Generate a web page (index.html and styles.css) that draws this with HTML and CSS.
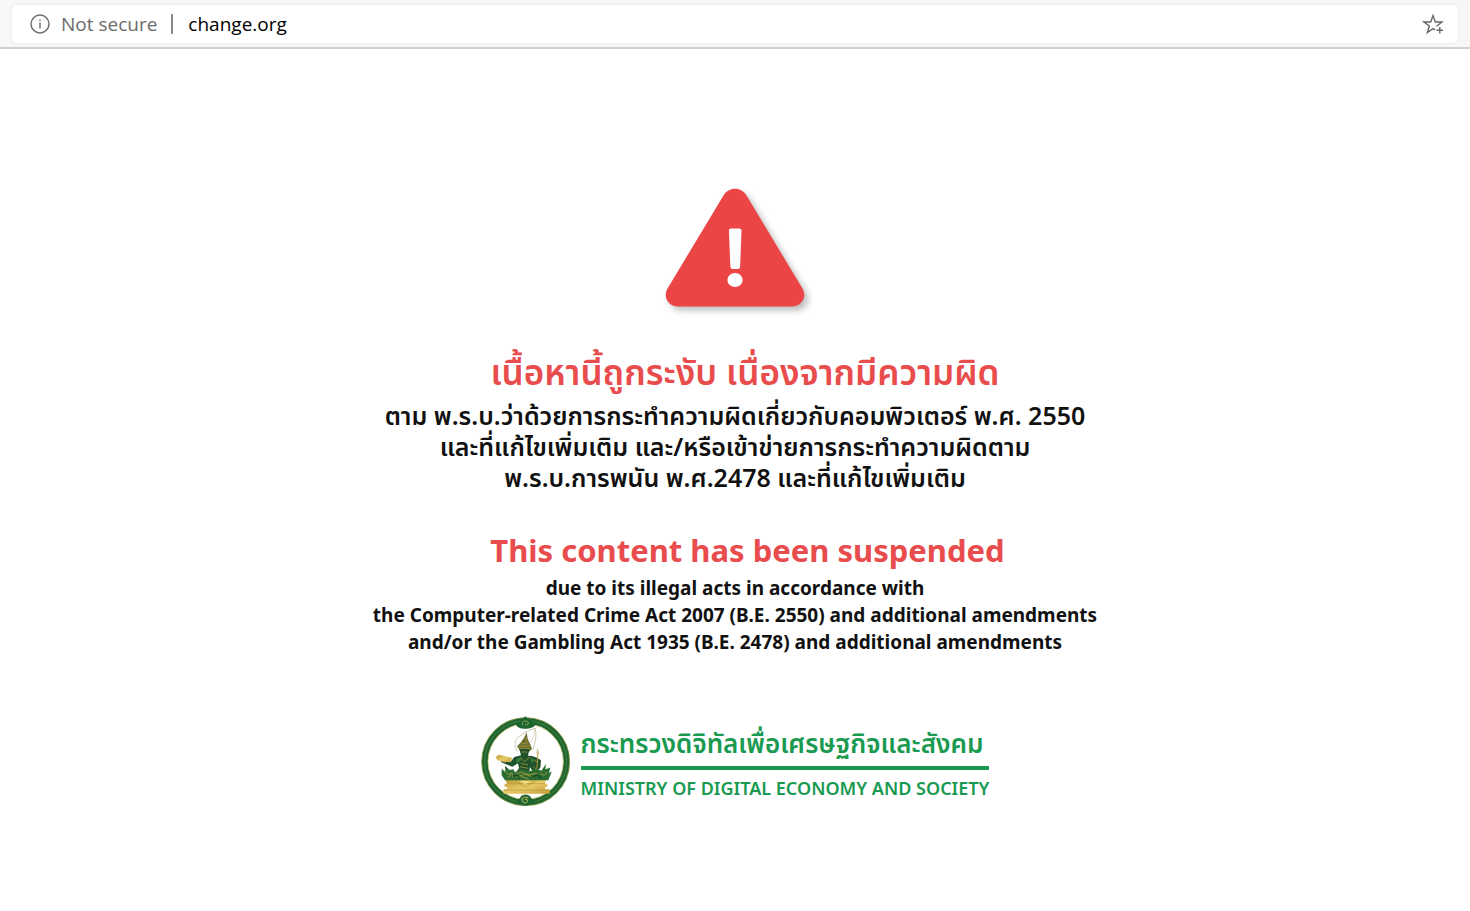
FILE: index.html
```html
<!DOCTYPE html>
<html lang="th">
<head>
    <meta charset="UTF-8">
    <meta name="viewport" content="width=device-width, initial-scale=1.0">
    <title>change.org</title>
    <link rel="stylesheet" href="styles.css">
</head>
<body>
    <header class="toolbar">
        <div class="address-bar">
            <button class="site-info" type="button">
                <svg class="info-icon" viewBox="0 0 20 20" aria-hidden="true">
                    <circle cx="10" cy="10" r="9"/>
                    <path d="M10 8.500v6M10 5.500v1.500"/>
                </svg>
                <span>Not secure</span>
            </button>
            <span class="divider"></span>
            <input class="address" type="text" value="change.org" aria-label="Address" spellcheck="false">
            <button class="favorite-btn" type="button" aria-label="Add to favorites">
                <svg viewBox="0 0 22 22" aria-hidden="true">
                    <path d="M14.500 13.200 20 9H13.300L11 2.500 8.700 9H2L7.400 13 5.300 19.500 11 15.600 13.200 17"/>
                    <path d="M17.800 14v6.500M14.500 17.300h6.500"/>
                </svg>
            </button>
        </div>
    </header>

    <main class="notice">
        <svg class="warning-icon" viewBox="0 0 140 120" aria-hidden="true">
            <path class="warning-shape" d="M58.500 7.500C63.500-1.500 76.500-1.500 81.500 7.500L137.200 100C142.500 109 137 118.500 127 118.500H13C3 118.500-2.500 109 2.800 100Z"/>
            <path class="warning-mark" d="M66 40.500h8.500q2 0 2 2.200l-1.400 36q-.2 2.300-2.200 2.300h-5.300q-2 0-2.200-2.300L63.900 42.700q0-2.200 2.100-2.200z"/>
            <ellipse class="warning-mark" cx="70" cy="92" rx="7.600" ry="7"/>
        </svg>

        <section class="message message-th">
            <h1>เนื้อหานี้ถูกระงับ เนื่องจากมีความผิด</h1>
            <p>
                ตาม พ.ร.บ.ว่าด้วยการกระทำความผิดเกี่ยวกับคอมพิวเตอร์ พ.ศ. 2550<br>
                และที่แก้ไขเพิ่มเติม และ/หรือเข้าข่ายการกระทำความผิดตาม<br>
                พ.ร.บ.การพนัน พ.ศ.2478 และที่แก้ไขเพิ่มเติม
            </p>
        </section>

        <section class="message message-en" lang="en">
            <h2>This content has been suspended</h2>
            <p>
                due to its illegal acts in accordance with<br>
                the Computer-related Crime Act 2007 (B.E. 2550) and additional amendments<br>
                and/or the Gambling Act 1935 (B.E. 2478) and additional amendments
            </p>
        </section>

        <footer class="ministry">
            <svg class="emblem" viewBox="30 18 270 270" aria-hidden="true">
                <defs>
                    <linearGradient id="gold" x1="0" y1="0" x2="1" y2="1">
                        <stop offset="0" stop-color="#bd9a33"/>
                        <stop offset=".5" stop-color="#e8ca66"/>
                        <stop offset="1" stop-color="#c5a03a"/>
                    </linearGradient>
                </defs>
                <!-- ring -->
                <circle cx="164" cy="155" r="123" fill="none" stroke="#1c6531" stroke-width="19"/>
                <circle cx="164" cy="155" r="132" fill="none" stroke="#a9a447" stroke-width="2"/>
                <circle cx="164" cy="155" r="123" fill="none" stroke="#5f8a42" stroke-width="2"/>
                <circle cx="164" cy="155" r="113" fill="none" stroke="#c5b65a" stroke-width="2"/>
                <path d="M134 42Q144 40 148 29Q158 28 163 19Q169 28 179 30Q184 40 195 42L188 50Q175 58 163 56Q150 58 139 50Z" fill="#1c6531"/>
                <path d="M156 46Q150 34 163 33Q174 34 172 42Q167 49 162 41" fill="none" stroke="#8ba551" stroke-width="3"/>
                <path d="M136 270Q148 267 150 258Q163 249 177 258Q180 267 193 270Q181 286 163 287Q146 286 136 270Z" fill="#1c6531"/>
                <path d="M172 264Q160 256 153 266Q152 279 164 279Q174 275 168 268Q162 265 161 271" fill="none" stroke="#c7bd62" stroke-width="3"/>
                <!-- halo -->
                <path d="M139 125Q124 99 140 82Q158 66 192 54Q200 78 186 118" fill="#fff" stroke="#cfc8ae" stroke-width="3"/>
                <path d="M192 55Q190 78 179 98" fill="none" stroke="#cfc8ae" stroke-width="2"/>
                <!-- throne -->
                <path d="M103 209H226L221 221H229V231H222V238H236V251H97V238H109V231H101V221H108Z" fill="url(#gold)"/>
                <path d="M108 221H222M99 240H234M132 212L163 231L194 212" fill="none" stroke="#a98428" stroke-width="1.500"/>
                <path d="M144 212L163 223L182 212Z" fill="#f0d983"/>
                <!-- crown, face and body -->
                <path d="M167 67L170 87L178 103L183 117L173 127L148 124L138 109L150 97L160 82Z" fill="#66702d"/>
                <path d="M163 81L167 94M151 102L172 98M144 109L179 107M146 117L178 116" stroke="#ab903b" stroke-width="3"/>
                <path d="M145 117H175L171 137L183 138L198 143L210 151L208 173L198 184L183 180L177 172L174 190H134L144 174L141 160L124 170L109 164L91 157L87 149L96 150L118 157L130 141L150 136Z" fill="#1f532b"/>
                <path d="M151 126H168M149 143L160 155L177 141M149 160L171 165M147 170L172 175M188 149L199 156M187 169L195 178" stroke="#8c883a" stroke-width="3" fill="none"/>
                <path d="M137 147L151 140L148 154L135 158ZM178 143L191 150L182 161Z" fill="#397d3b"/>
                <path d="M74 141L84 134L123 143L120 155L101 157L79 151Z" fill="url(#gold)"/>
                <!-- sword -->
                <path d="M198 118Q205 126 200 139L197 190" fill="none" stroke="#b3943c" stroke-width="3"/>
                <path d="M199 117Q207 129 199 141Q194 131 199 117Z" fill="#d7c789"/>
                <!-- legs and drapery -->
                <path d="M92 176L103 186L102 167L116 180L127 178L132 187L149 177L175 184L196 176L211 182L225 162L223 178L238 173L234 188L242 185L232 211H102L92 196Z" fill="#2b6d31"/>
                <path d="M101 184L114 194L123 188L125 202M133 193L151 186L173 194L200 190M137 202L160 192L187 202M208 191L220 196L229 186M149 199L173 207M110 203L119 196" fill="none" stroke="#9c963b" stroke-width="3"/>
                <path d="M125 198L139 195L147 207M175 204L199 195L213 205" fill="none" stroke="#184a26" stroke-width="4"/>
            </svg>
            <div class="ministry-name">
                <p class="name-th">กระทรวงดิจิทัลเพื่อเศรษฐกิจและสังคม</p>
                <p class="name-en" lang="en">MINISTRY OF DIGITAL ECONOMY AND SOCIETY</p>
            </div>
        </footer>
    </main>
</body>
</html>
```
FILE: styles.css
```css
:root {
    --red: #ec4545;
    --heading-red: #e84c4c;
    --green: #199a50;
    --text: #111;
    --grey: #6b6b6b;
}

* {
    box-sizing: border-box;
}

body {
    margin: 0;
    background-color: #fff;
    color: var(--text);
    font-family: "Noto Sans", "Noto Sans Thai", "Open Sans", sans-serif;
}

h1, h2, p {
    margin: 0;
}

button, input {
    padding: 0;
    border: none;
    background: none;
    font: inherit;
    color: inherit;
}

.toolbar {
    padding: 5px 12px 4px;
    background-color: #f7f7f7;
    border-bottom: 2px solid #d0d0d0;
}

.address-bar {
    display: flex;
    align-items: center;
    height: 38px;
    padding: 0 14px 0 18px;
    background-color: #fff;
    border-radius: 5px;
    box-shadow: 0 0 3px rgba(0, 0, 0, 0.08);
    font-family: "Open Sans", sans-serif;
    font-size: 19px;
}

.site-info {
    display: flex;
    align-items: center;
    gap: 11px;
    color: var(--grey);
}

.info-icon {
    width: 20px;
    height: 20px;
    fill: none;
    stroke: var(--grey);
    stroke-width: 1.4;
}

.divider {
    width: 2px;
    height: 20px;
    margin: 0 15px 0 14px;
    background-color: #888;
}

.address {
    flex: 1;
    min-width: 0;
    color: #000;
    outline: none;
}

.favorite-btn svg {
    display: block;
    width: 22px;
    height: 22px;
    fill: none;
    stroke: #666;
    stroke-width: 1.4;
}

.notice {
    display: flex;
    flex-direction: column;
    align-items: center;
    padding: 139px 16px 40px;
    text-align: center;
}

.warning-icon {
    width: 140px;
    height: 120px;
    overflow: visible;
    filter: drop-shadow(4px 4px 3px rgba(0, 0, 0, 0.25));
}

.warning-shape {
    fill: var(--red);
}

.warning-mark {
    fill: #fff;
}

.message h1, .message h2 {
    color: var(--heading-red);
}

.message-th {
    margin-top: 40px;
}

.message-th h1 {
    padding: 0 0 4px 20px;
    font-size: 35px;
    font-weight: 600;
    line-height: 48px;
}

.message-th p {
    font-size: 25px;
    font-weight: 600;
    line-height: 31px;
}

.message-en {
    margin-top: 35px;
}

.message-en h2 {
    padding: 0 0 3px 25px;
    font-size: 31px;
    line-height: 44px;
}

.message-en p {
    font-size: 19px;
    font-weight: 700;
    line-height: 27px;
}

.ministry {
    display: flex;
    align-items: center;
    gap: 10px;
    margin-top: 60px;
    color: var(--green);
    text-align: left;
}

.emblem {
    width: 90px;
    height: 90px;
}

.name-th {
    padding: 4px 0;
    border-bottom: 4px solid var(--green);
    font-size: 26px;
    font-weight: 600;
    line-height: 38px;
}

.name-en {
    padding-top: 4px;
    font-size: 18px;
    font-weight: 600;
    line-height: 28px;
}
```
